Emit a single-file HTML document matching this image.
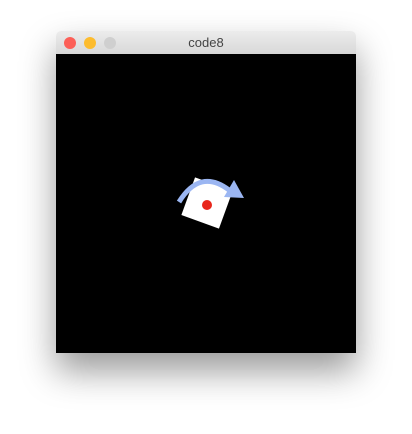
<!DOCTYPE html>
<html><head><style>
body{margin:0;width:412px;height:434px;background:#fff;position:relative;overflow:hidden;font-family:"Liberation Sans",sans-serif}
.win{position:absolute;left:56px;top:31px;width:300px;height:322px;box-shadow:0 18px 35px rgba(0,0,0,0.4);border-radius:5px 5px 0 0}
.tb{height:23px;background:linear-gradient(#ececec,#d8d8d8);border-radius:5px 5px 0 0;border-bottom:1px solid #b8b8b8;position:relative;text-align:center;font-size:13px;line-height:24px;color:#444}
.d{position:absolute;top:6px;width:12px;height:12px;border-radius:50%}
.c{position:absolute;top:23px;left:0;width:300px;height:299px;background:#000}
</style></head><body>
<div class="win"><div class="tb">code8
<span class="d" style="left:8px;background:#fc5f57"></span>
<span class="d" style="left:28px;background:#fdbc2e"></span>
<span class="d" style="left:48px;background:#cfcfcf"></span></div>
<div class="c"></div></div>
<svg width="412" height="434" style="position:absolute;left:0;top:0">
<g transform="translate(207,203) rotate(20)"><rect x="-20" y="-20" width="40" height="40" fill="#fff"/></g>
<circle cx="207" cy="205" r="5" fill="#e8261b"/>
<path d="M179,202 Q200,168 229,190" fill="none" stroke="#9bb6f2" stroke-width="5"/>
<polygon points="234,180 244,198 224,197" fill="#9bb6f2"/>
</svg>
</body></html>
